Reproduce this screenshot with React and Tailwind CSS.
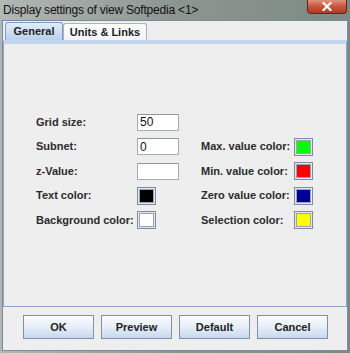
const labelCls = "text-[11px] font-bold text-[#2b2b2b] leading-none";

const Field = ({ value }) => (
  <div className="w-[42px] h-[17px] bg-white border border-[#a5acb5] border-t-[#8e959e] pl-[2px] flex items-center text-[12px] text-[#111] leading-none">
    {value}
  </div>
);

const Swatch = ({ color }) => (
  <div className="w-[19px] h-[18px] border border-[#7d8ba0] p-[1px] bg-[#e3e8f0]">
    <div className="w-full h-full border border-[#9aa4b3]" style={{ background: color }} />
  </div>
);

const Btn = ({ children }) => (
  <button className="w-[71px] h-[24px] border border-[#7f8fa4] bg-gradient-to-b from-[#fbfcfe] via-[#e6eef8] to-[#c7d9ef] text-[11px] font-bold text-[#222] leading-none">
    {children}
  </button>
);

export default function App() {
  return (
    <div
      className="w-[350px] h-[353px] flex flex-col bg-gradient-to-r from-[#b2b8b4] via-[#8c9690] to-[#7c8a83]"
      style={{ fontFamily: '"Liberation Sans", Arial, sans-serif' }}
    >
      {/* title bar */}
      <div className="h-[20px] flex justify-between items-start">
        <div className="pl-[3px] pt-[4px] text-[12px] text-[#111] leading-none tracking-[-0.2px]">
          Display settings of view Softpedia &lt;1&gt;
        </div>
        <div className="mr-[3px] w-[40px] h-[14px] rounded-b-[4px] border border-[#5a2a22] border-t-0 bg-gradient-to-b from-[#e0917c] via-[#c8543c] to-[#b23a24] flex items-center justify-center">
          <svg width="10" height="9" viewBox="0 0 10 9">
            <path d="M1.5 1 L8.5 8 M8.5 1 L1.5 8" stroke="#fff" strokeWidth="2.2" strokeLinecap="square" />
          </svg>
        </div>
      </div>

      {/* client area */}
      <div className="mx-[2px] mb-[2px] flex-1 bg-[#eeeeee] border border-[#7c8aa0] flex flex-col">
        {/* tabs */}
        <div className="flex items-end pl-[2px] pt-[1px] h-[19px]">
          <div className="h-[18px] w-[58px] rounded-t-[3px] border border-b-0 border-[#7f9dc4] bg-gradient-to-b from-[#e2ecfa] to-[#b9d0ee] flex items-center justify-center text-[11px] font-bold text-[#222] leading-none">
            General
          </div>
          <div className="h-[17px] w-[84px] rounded-t-[3px] border border-b-0 border-[#a3b3cc] bg-gradient-to-b from-white to-[#f2f4f8] flex items-center justify-center text-[11px] font-bold text-[#222] leading-none">
            Units &amp; Links
          </div>
        </div>

        {/* panel */}
        <div className="h-[267px] border border-[#8ea6c9] border-t-[4px] border-t-[#c3d6f0] bg-[#eeeeee]">
          <div className="pt-[66px] pl-[32px]">
            <div className="grid grid-cols-[101px_64px_93px_auto] auto-rows-[24.5px] items-center">
              <div className={labelCls}>Grid size:</div>
              <Field value="50" />
              <div />
              <div />

              <div className={labelCls}>Subnet:</div>
              <Field value="0" />
              <div className={labelCls}>Max. value color:</div>
              <Swatch color="#00ff00" />

              <div className={labelCls}>z-Value:</div>
              <Field value="" />
              <div className={labelCls}>Min. value color:</div>
              <Swatch color="#ff0000" />

              <div className={labelCls}>Text color:</div>
              <Swatch color="#000000" />
              <div className={labelCls}>Zero value color:</div>
              <Swatch color="#000099" />

              <div className={labelCls}>Background color:</div>
              <Swatch color="#ffffff" />
              <div className={labelCls}>Selection color:</div>
              <Swatch color="#ffff00" />
            </div>
          </div>
        </div>

        {/* buttons */}
        <div className="flex gap-[7px] pl-[20px] pt-[8px]">
          <Btn>OK</Btn>
          <Btn>Preview</Btn>
          <Btn>Default</Btn>
          <Btn>Cancel</Btn>
        </div>
      </div>
    </div>
  );
}
